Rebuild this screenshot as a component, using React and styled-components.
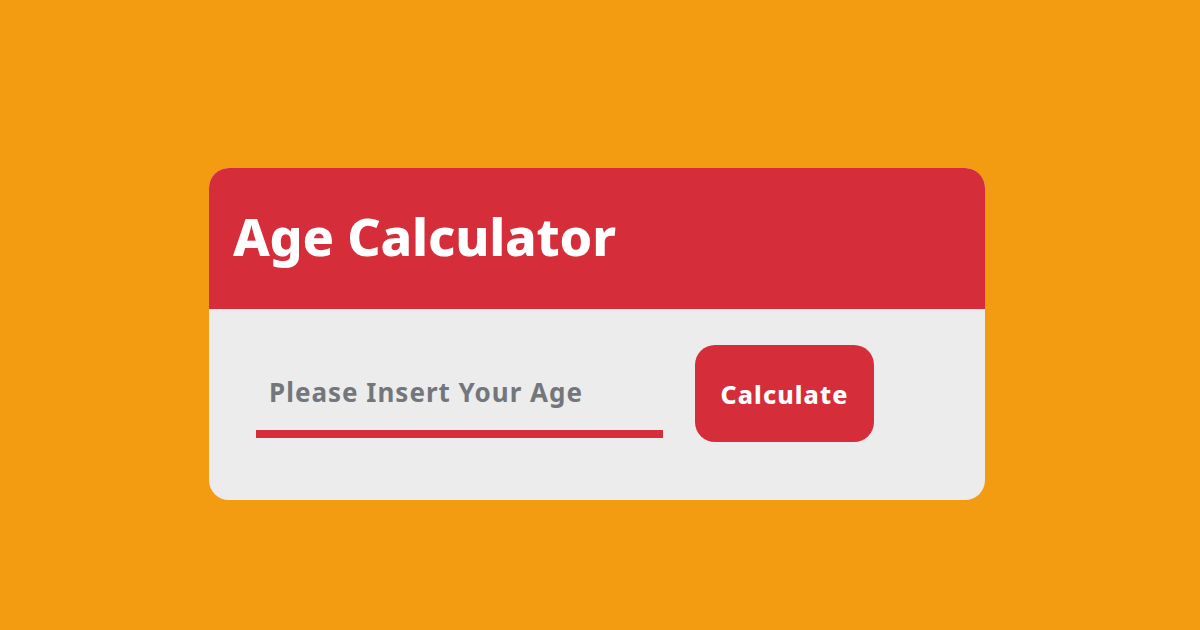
import React, { useState } from 'react';
import styled, { createGlobalStyle } from 'styled-components';

const GlobalStyle = createGlobalStyle`
    html, body {
        margin: 0;
        padding: 0;
    }

    body {
        background-color: #F39C12;
        font-family: 'Noto Sans', 'Open Sans', sans-serif;
    }
`;

const Page = styled.div`
    width: 100vw;
    height: 100vh;
    display: flex;
    justify-content: flex-start;
    align-items: flex-start;
    padding: 168px 0 0 209px;
    box-sizing: border-box;
`;

const Card = styled.div`
    width: 776px;
    height: 332px;
    border-radius: 20px;
    overflow: hidden;
    background-color: #ECECEC;
    display: flex;
    flex-direction: column;
`;

const Header = styled.div`
    height: 141px;
    box-sizing: border-box;
    background-color: #D62D3A;
    display: flex;
    align-items: center;
    padding-left: 24px;
    padding-bottom: 6px;

    h1 {
        margin: 0;
        color: #ffffff;
        font-size: 52px;
        font-weight: 800;
        letter-spacing: -0.2px;
    }
`;

const Body = styled.form`
    flex: 1;
    display: flex;
    align-items: flex-start;
    gap: 32px;
    padding: 36px 47px;
`;

const AgeInput = styled.input`
    width: 407px;
    height: 93px;
    box-sizing: border-box;
    border: none;
    border-bottom: 8px solid #D62D3A;
    background: transparent;
    padding: 0 13px;
    padding-top: 8px;
    font-family: 'Noto Sans', sans-serif;
    font-size: 26px;
    font-weight: 700;
    color: #333;
    outline: none;

    &::placeholder {
        color: #73777c;
        letter-spacing: 1px;
    }
`;

const Button = styled.button`
    width: 179px;
    height: 97px;
    border: none;
    border-radius: 20px;
    background-color: #D62D3A;
    color: #ffffff;
    font-family: 'Noto Sans', sans-serif;
    font-size: 25px;
    font-weight: 800;
    letter-spacing: 1.1px;
    cursor: pointer;
`;

const App = () => {

    const [age, setAge] = useState('');

    return (
        <>
            <GlobalStyle />
            <Page>
                <Card>
                    <Header>
                        <h1>Age Calculator</h1>
                    </Header>
                    <Body onSubmit={e => e.preventDefault()}>
                        <AgeInput
                            type='text'
                            placeholder='Please Insert Your Age'
                            value={age}
                            onChange={e => setAge(e.target.value)}
                        />
                        <Button type='submit'>Calculate</Button>
                    </Body>
                </Card>
            </Page>
        </>
    );
}

export default App;
